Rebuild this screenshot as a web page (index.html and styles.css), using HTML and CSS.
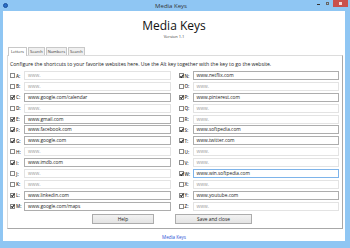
FILE: index.html
```html
<!DOCTYPE html>
<html lang="en">
<head>
  <meta charset="UTF-8" />
  <title>Media Keys</title>
  <link rel="stylesheet" href="styles.css">
</head>
<body>
  <div class="window">
    <div class="titlebar">
      <span class="app-icon"></span>
      <span class="title">Media Keys</span>
      <div class="controls">
        <span class="ctl min"></span>
        <span class="ctl max"></span>
        <span class="ctl close"></span>
      </div>
    </div>

    <div class="client">
      <h1>Media Keys</h1>
      <div class="version">Version 1.1</div>

      <div class="tabs">
        <span class="tab active">Letters</span>
        <span class="tab">Search</span>
        <span class="tab">Numbers</span>
        <span class="tab">Search</span>
      </div>

      <div class="panel">
        <p class="intro">Configure the shortcuts to your favorite websites here. Use the Alt key together with the key to go the website.</p>

        <div class="grid" id="grid"></div>

        <div class="buttons">
          <button>Help</button>
          <button class="save">Save and close</button>
        </div>
      </div>

      <div class="footer"><a>Media Keys</a></div>
    </div>
  </div>

  <script>
    const keys = {
      C: 'www.google.com/calendar', E: 'www.gmail.com', F: 'www.facebook.com',
      G: 'www.google.com', I: 'www.imdb.com', L: 'www.linkedin.com',
      M: 'www.google.com/maps', N: 'www.netflix.com', P: 'www.pinterest.com',
      S: 'www.softpedia.com', T: 'www.twitter.com', W: 'www.win.softpedia.com',
      Y: 'www.youtube.com'
    };
    const letters = 'ABCDEFGHIJKLMNOPQRSTUVWXYZ'.split('');
    const grid = document.getElementById('grid');
    // left column A-M, right column N-Z
    for (let i = 0; i < 13; i++) {
      [letters[i], letters[i + 13]].forEach(l => {
        const url = keys[l];
        const row = document.createElement('div');
        row.className = 'row';
        row.innerHTML =
          `<span class="check${url ? ' on' : ''}"></span>` +
          `<span class="key">${l}:</span>` +
          `<span class="field${url ? ' filled' : ''}${l === 'W' ? ' focus' : ''}">${url || 'www.'}</span>`;
        grid.appendChild(row);
      });
    }
  </script>
</body>
</html>
```

FILE: styles.css
```css
body {
  margin: 0;
  width: 350px;
  height: 248px;
  overflow: hidden;
  background: #8fc6f3;
  font-family: "Open Sans", Arial, sans-serif;
  color: #222;
}
.window {
  display: flex;
  flex-direction: column;
  height: 248px;
}
.titlebar {
  height: 11px;
  display: flex;
  align-items: center;
  position: relative;
}
.app-icon {
  width: 5px;
  height: 5px;
  margin-left: 3px;
  border-radius: 50%;
  background: #2a6fc9;
  border: 1px solid #1b4f99;
  box-sizing: border-box;
}
.title {
  flex: 1;
  text-align: center;
  font-size: 6px;
  color: #333;
  padding-left: 20px;
}
.controls {
  display: flex;
  align-self: flex-start;
  margin-right: 2px;
}
.ctl {
  height: 7px;
  width: 9px;
  position: relative;
}
.ctl.min::after {
  content: "";
  position: absolute;
  left: 3px;
  top: 4px;
  width: 3px;
  height: 1px;
  background: #333;
}
.ctl.max::after {
  content: "";
  position: absolute;
  left: 3px;
  top: 2px;
  width: 3px;
  height: 3px;
  border: 1px solid #666;
  box-sizing: border-box;
}
.ctl.close {
  width: 15px;
  margin-left: 1px;
  background: #c9504c;
}
.ctl.close::after {
  content: "";
  position: absolute;
  left: 6px;
  top: 2px;
  width: 3px;
  height: 3px;
  background: #f3d6d5;
}
.client {
  background: #fff;
  margin: 0 5px 0 3px;
  height: 230px;
  display: flex;
  flex-direction: column;
}
h1 {
  margin: 8px 0 0;
  font-size: 12px;
  font-weight: normal;
  text-align: center;
  line-height: 14px;
  color: #111;
}
.version {
  text-align: center;
  font-size: 4px;
  line-height: 6px;
  margin-top: 1px;
  color: #333;
}
.tabs {
  display: flex;
  margin: 6px 0 0 5px;
  height: 9px;
  align-items: flex-end;
}
.tab {
  font-size: 4px;
  line-height: 7px;
  padding: 0 1px;
  border: 1px solid #c8c8c8;
  border-bottom: none;
  background: #f0f0f0;
  color: #333;
  margin-right: 1px;
}
.tab.active {
  background: #fff;
  line-height: 8px;
  padding: 0 2px;
  position: relative;
  top: 1px;
}
.panel {
  margin: 0 2px 0 4px;
  height: 174px;
  box-sizing: border-box;
  border: 1px solid #dcdcdc;
  border-right-color: #a8a8a8;
  border-bottom-color: #a8a8a8;
  padding: 4px 3px 0 2px;
  display: flex;
  flex-direction: column;
}
.intro {
  margin: 0;
  font-size: 5.1px;
  line-height: 8px;
  color: #222;
}
.grid {
  margin-top: 3px;
  display: grid;
  grid-template-columns: 1fr 1fr;
  column-gap: 8px;
  row-gap: 1.9px;
}
.row {
  display: flex;
  align-items: center;
  height: 9px;
}
.check {
  width: 5px;
  height: 5px;
  border: 1px solid #8a8a8a;
  box-sizing: border-box;
  background: #fff;
  position: relative;
}
.check.on::after {
  content: "";
  position: absolute;
  left: 1px;
  top: -0.5px;
  width: 1.3px;
  height: 2.6px;
  border: solid #222;
  border-width: 0 0.8px 0.8px 0;
  transform: rotate(40deg);
}
.key {
  width: 8px;
  padding-left: 1px;
  font-size: 4.6px;
  font-weight: 600;
  color: #333;
}
.field {
  flex: 1;
  height: 9px;
  box-sizing: border-box;
  border: 1px solid #e3e3e3;
  font-size: 4.8px;
  line-height: 7px;
  padding-left: 3px;
  color: #9a9a9a;
  white-space: nowrap;
  overflow: hidden;
}
.field.filled {
  border-color: #adadad;
  color: #222;
}
.field.focus {
  border-color: #7eb4ea;
}
.buttons {
  display: flex;
  justify-content: center;
  gap: 21px;
  margin-top: 3px;
  padding-right: 5px;
}
button {
  font-family: "Open Sans", Arial, sans-serif;
  font-size: 4.8px;
  height: 10px;
  width: 62px;
  padding: 0;
  border: 1px solid #acacac;
  background: linear-gradient(#f2f2f2, #e3e3e3);
  color: #222;
}
button.save {
  width: 77px;
}
.footer {
  text-align: center;
  margin-top: 5px;
  font-size: 4.5px;
  line-height: 6px;
}
.footer a {
  color: #2a4fd6;
}
```
